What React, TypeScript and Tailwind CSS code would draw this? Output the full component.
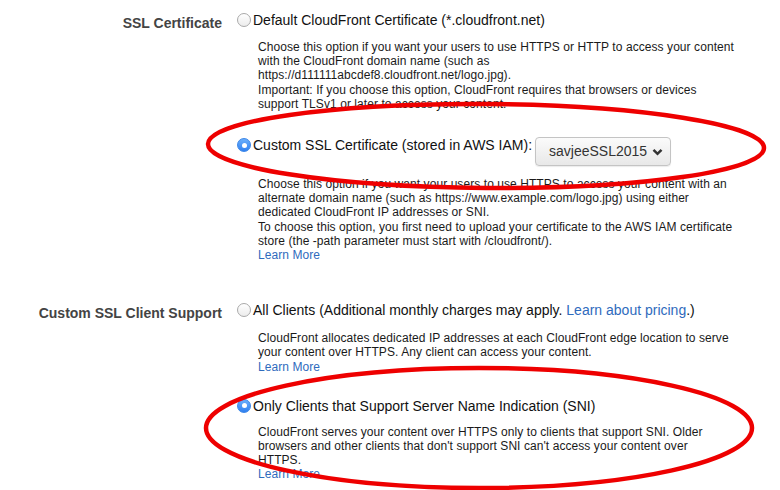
import React from "react";

const FONT = { fontFamily: '"Liberation Sans", Arial, Helvetica, sans-serif' };

function Radio({ checked }: { checked: boolean }) {
  if (checked) {
    return (
      <span className="flex h-[14px] w-[14px] shrink-0 items-center justify-center rounded-full border border-[#3b86e8] bg-gradient-to-b from-[#6aaefb] to-[#2f80f0]">
        <span className="h-[5px] w-[5px] rounded-full bg-white" />
      </span>
    );
  }
  return (
    <span className="h-[14px] w-[14px] shrink-0 rounded-full border border-[#a9a9a9] bg-gradient-to-b from-white to-[#ececec]" />
  );
}

function Desc({ lines, learnMore, className }: { lines: string[]; learnMore?: boolean; className?: string }) {
  return (
    <div className={`pl-[21px] text-[12px] leading-[14.2px] tracking-[0.07px] text-[#1a1a1a] ${className ?? ""}`}>
      {lines.map((l, i) => (
        <div key={i} className="whitespace-nowrap">
          {l}
        </div>
      ))}
      {learnMore && <div className="text-[#2f6bbd]">Learn More</div>}
    </div>
  );
}

function Label({ children, className }: { children: React.ReactNode; className?: string }) {
  return (
    <div className={`w-[222px] shrink-0 text-right text-[14px] font-bold leading-[18px] text-[#444] ${className ?? ""}`}>
      {children}
    </div>
  );
}

export default function App() {
  return (
    <div className="relative h-[490px] w-[780px] overflow-hidden bg-white" style={FONT}>
      <div className="pt-[11px]">
        {/* SSL Certificate */}
        <div className="flex">
          <Label className="mt-[3px]">SSL Certificate</Label>
          <div className="ml-[15px]">
            <div className="flex items-center gap-[2px] text-[14px] leading-[18px] text-[#111]">
              <Radio checked={false} />
              <span>Default CloudFront Certificate (*.cloudfront.net)</span>
            </div>
            <Desc
              className="mt-[11px]"
              lines={[
                "Choose this option if you want your users to use HTTPS or HTTP to access your content",
                "with the CloudFront domain name (such as",
                "https://d111111abcdef8.cloudfront.net/logo.jpg).",
                "Important: If you choose this option, CloudFront requires that browsers or devices",
                "support TLSv1 or later to access your content.",
              ]}
            />

            <div className="mt-[25px] flex items-start">
              <div className="flex items-center gap-[2px] text-[14px] leading-[18px] text-[#111]">
                <Radio checked />
                <span>Custom SSL Certificate (stored in AWS IAM):</span>
              </div>
              <button className="ml-[3px] mt-[1px] flex h-[29px] w-[136px] items-center rounded-[4px] border border-[#c4c4c4] bg-gradient-to-b from-[#fbfbfb] to-[#e8e8e8] pl-[13px] text-[14px] text-[#333] shadow-[0_1px_1px_rgba(0,0,0,0.08)]">
                <span>savjeeSSL2015</span>
                <svg className="ml-[5px]" width="11" height="8" viewBox="0 0 11 8" fill="none">
                  <path d="M1.5 1.8 L5.5 5.8 L9.5 1.8" stroke="#333" strokeWidth="2.5" />
                </svg>
              </button>
            </div>
            <Desc
              className="mt-[11px]"
              learnMore
              lines={[
                "Choose this option if you want your users to use HTTPS to access your content with an",
                "alternate domain name (such as https://www.example.com/logo.jpg) using either",
                "dedicated CloudFront IP addresses or SNI.",
                "To choose this option, you first need to upload your certificate to the AWS IAM certificate",
                "store (the -path parameter must start with /cloudfront/).",
              ]}
            />
          </div>
        </div>

        {/* Custom SSL Client Support */}
        <div className="mt-[39px] flex">
          <Label className="mt-[3px]">Custom SSL Client Support</Label>
          <div className="ml-[15px]">
            <div className="flex items-center gap-[2px] text-[14px] leading-[18px] text-[#111]">
              <Radio checked={false} />
              <span>
                All Clients (Additional monthly charges may apply.{" "}
                <span className="text-[#2f6bbd]">Learn about pricing</span>.)
              </span>
            </div>
            <Desc
              className="mt-[12px]"
              learnMore
              lines={[
                "CloudFront allocates dedicated IP addresses at each CloudFront edge location to serve",
                "your content over HTTPS. Any client can access your content.",
              ]}
            />

            <div className="mt-[23px] flex items-center gap-[2px] text-[14px] leading-[18px] text-[#111]">
              <Radio checked />
              <span>Only Clients that Support Server Name Indication (SNI)</span>
            </div>
            <Desc
              className="mt-[10px]"
              learnMore
              lines={[
                "CloudFront serves your content over HTTPS only to clients that support SNI. Older",
                "browsers and other clients that don't support SNI can't access your content over",
                "HTTPS.",
              ]}
            />
          </div>
        </div>
      </div>

      {/* red annotation ellipses drawn over the screenshot */}
      <svg className="pointer-events-none absolute left-0 top-0" width="780" height="490" viewBox="0 0 780 490">
        <ellipse cx="486" cy="146" rx="278" ry="42" fill="none" stroke="#ee0000" strokeWidth="4.5" transform="rotate(0.4 486 146)" />
        <ellipse cx="479" cy="428" rx="273" ry="60" fill="none" stroke="#ee0000" strokeWidth="4.5" />
      </svg>
    </div>
  );
}
